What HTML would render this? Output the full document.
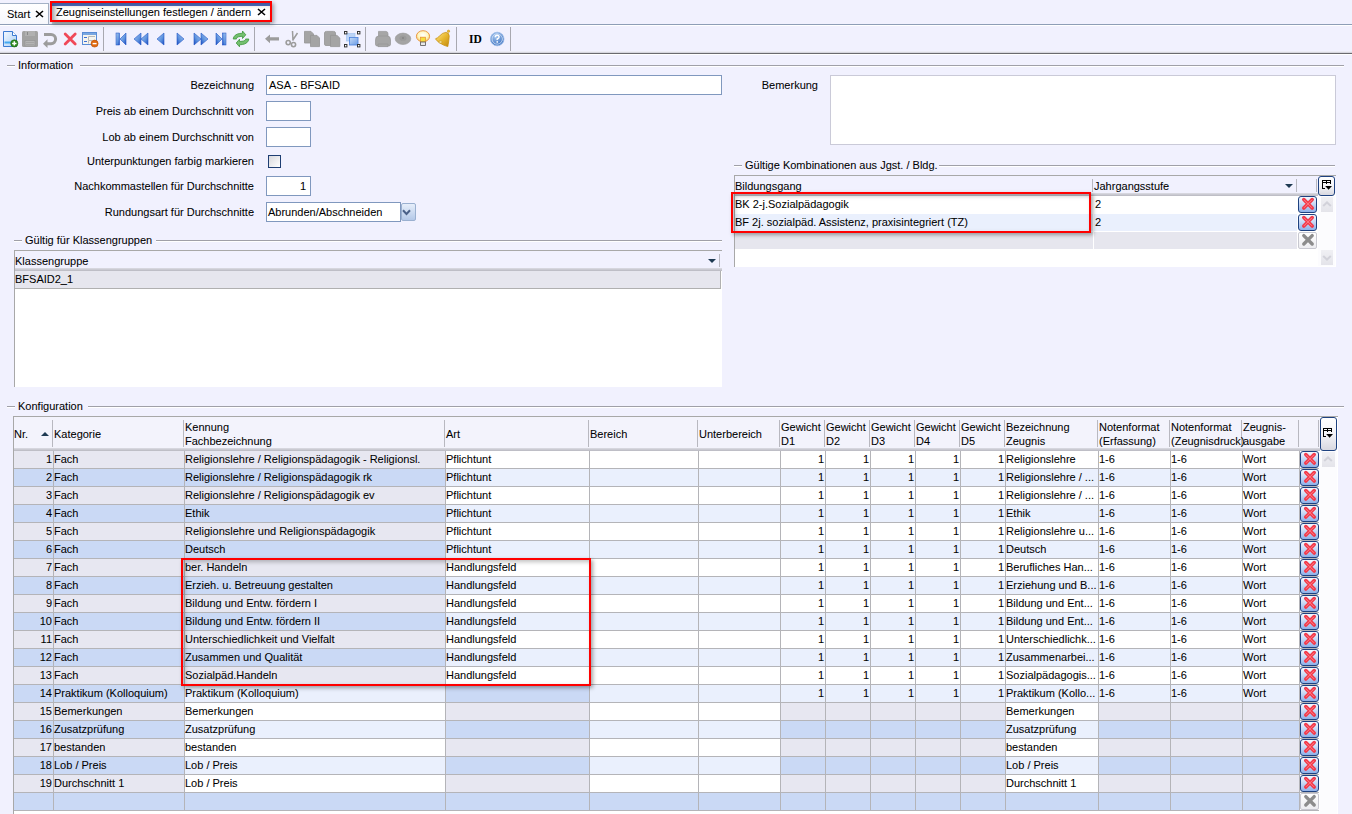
<!DOCTYPE html>
<html><head><meta charset="utf-8"><title>Zeugniseinstellungen</title><style>
html,body{margin:0;padding:0}
body{width:1352px;height:814px;overflow:hidden;position:relative;background:#F1F1FE;font-family:"Liberation Sans",sans-serif;font-size:11px;color:#000}
.t{position:absolute;line-height:13px;white-space:nowrap;-webkit-text-stroke:0.05px #000}
.r{position:absolute}
.db{width:19px;box-sizing:border-box;border:1px solid #1F4280;border-radius:3px;background:linear-gradient(#F4F8FF,#C4D6F4 50%,#8EB0E8)}
.dbi{width:19px;box-sizing:border-box;border:1px solid #C8C8D0;border-radius:2px;background:linear-gradient(#FFFFFF,#ECECF0)}
.cb{box-sizing:border-box;border:1px solid #1F4280;border-radius:3px;background:linear-gradient(#FFFFFF,#F4F4F8 50%,#D8D8E0)}
.red{box-sizing:border-box;border:2px solid #FF0000;box-shadow:2px 2px 4px rgba(0,0,0,0.35), inset 2px 2px 4px rgba(0,0,0,0.25)}
</style></head>
<body>
<div class="r" style="left:0px;top:24px;width:1352px;height:1px;background:#8E9EB6"></div>
<div class="r" style="left:0px;top:25px;width:1352px;height:1px;background:#FFFFFF"></div>
<div class="r" style="left:0px;top:3px;width:48px;height:21px;background:linear-gradient(#FFFFFF,#F6F7FC);border-top:1px solid #A4B2C6;border-right:1px solid #A4B2C6;box-sizing:border-box;width:49px"></div>
<div class="t " style="left:7px;top:8px;">Start</div>
<svg class="r" style="left:35px;top:10px" width="9" height="8"><path d="M1 1 L8 7 M8 1 L1 7" stroke="#000" stroke-width="1.6"/></svg>
<div class="r" style="left:52px;top:3px;width:218px;height:21px;background:linear-gradient(90deg,#D8D8DC 0,#FFFFFF 8px,#FFFFFF 100%);"></div>
<div class="r" style="left:52px;top:3px;width:218px;height:3px;background:#4F70C4"></div>
<div class="r" style="left:52px;top:21px;width:218px;height:3px;background:linear-gradient(#D4DCE0,#B8C4CC)"></div>
<div class="t " style="left:56px;top:6px;">Zeugniseinstellungen festlegen / ändern</div>
<svg class="r" style="left:257px;top:8px" width="9" height="8"><path d="M1 1 L8 7 M8 1 L1 7" stroke="#000" stroke-width="1.6"/></svg>
<div class="r" style="left:0px;top:51px;width:1352px;height:1px;background:#ECECF4"></div>
<div class="r" style="left:0px;top:52px;width:1352px;height:1px;background:#D6D6DE"></div>
<div class="r" style="left:0px;top:53px;width:1352px;height:1px;background:#6A6A6E"></div>
<div class="r" style="left:0px;top:54px;width:1352px;height:1px;background:#FFFFFF"></div>
<svg class="r" style="left:0;top:26px" width="520" height="26" viewBox="0 0 520 26"><defs>
<linearGradient id="gDoc" x1="0" y1="0" x2="1" y2="1"><stop offset="0" stop-color="#F4F9FF"/><stop offset="1" stop-color="#A9CDF5"/></linearGradient>
<linearGradient id="gNav" x1="0" y1="0" x2="1" y2="1"><stop offset="0" stop-color="#A8C8F0"/><stop offset="0.6" stop-color="#5C92DE"/><stop offset="1" stop-color="#1848C0"/></linearGradient>
<linearGradient id="gNavR" x1="1" y1="0" x2="0" y2="1"><stop offset="0" stop-color="#A8C8F0"/><stop offset="0.6" stop-color="#5C92DE"/><stop offset="1" stop-color="#1848C0"/></linearGradient>
<radialGradient id="gBulb" cx="0.5" cy="0.4" r="0.6"><stop offset="0" stop-color="#FFFFFF"/><stop offset="0.6" stop-color="#FFF6C0"/><stop offset="1" stop-color="#F8C860"/></radialGradient>
<linearGradient id="gBell" x1="0" y1="0" x2="1" y2="1"><stop offset="0" stop-color="#FFE890"/><stop offset="0.5" stop-color="#E8B830"/><stop offset="1" stop-color="#C08810"/></linearGradient>
<radialGradient id="gHelp" cx="0.4" cy="0.3" r="0.7"><stop offset="0" stop-color="#A8C8F0"/><stop offset="1" stop-color="#3A70C0"/></radialGradient>
<linearGradient id="gSel" x1="0" y1="0" x2="1" y2="1"><stop offset="0" stop-color="#C4DAF8"/><stop offset="1" stop-color="#6C9CE4"/></linearGradient>
</defs><path d="M3.5 5.5 H12.5 L16.5 9.5 V20.5 H3.5 Z" fill="url(#gDoc)" stroke="#3C7AD2" stroke-width="1"/><path d="M12.5 5.5 V9.5 H16.5" fill="#FFFFFF" stroke="#3C7AD2" stroke-width="1"/><rect x="4.5" y="15.5" width="8" height="2" fill="#44A8F0"/><circle cx="14.3" cy="17.4" r="3.6" fill="#2E8A22" stroke="#1E6A18" stroke-width="0.6"/><path d="M14.3 15.2 V19.6 M12.1 17.4 H16.5" stroke="#FFFFFF" stroke-width="1.5"/><rect x="22" y="5" width="16" height="16" rx="1.5" fill="#A2A2A2"/><rect x="25" y="5" width="10" height="5" fill="#B0B0B0"/><rect x="27" y="6" width="1" height="3" fill="#888"/><rect x="25" y="14.5" width="10" height="5.5" fill="#B4B4B4" stroke="#989898" stroke-width="0.8"/><path d="M26 16.5 H34 M26 18.5 H34" stroke="#A0A0A0" stroke-width="0.8"/><path d="M44 8.5 H51 A4.6 4.6 0 0 1 51 17.7 H47" fill="none" stroke="#9C9C9C" stroke-width="3"/><path d="M43 17.7 L47.5 13.2 V22 Z" fill="#9C9C9C"/><path d="M65.2 8 L75.2 18 M75.2 8 L65.2 18" stroke="#F04858" stroke-width="2.8" stroke-linecap="round"/><rect x="82.5" y="6.5" width="14" height="12" fill="#F6F4EE" stroke="#5A8CD6" stroke-width="1"/><rect x="83" y="7" width="13" height="2" fill="#7AA6E0"/><path d="M84 11.5 H87 M84 15.5 H87" stroke="#3A6ED6" stroke-width="1.2"/><path d="M88.5 14 V10.5 H95 M88.5 17.5 V14.5 H92" fill="none" stroke="#B8B8B8" stroke-width="1"/><circle cx="94.6" cy="17.6" r="3.5" fill="#E06A10" stroke="#B84A00" stroke-width="0.6"/><path d="M92.6 17.6 H96.6" stroke="#FFFFFF" stroke-width="1.4"/><rect x="116" y="7" width="3.6" height="12" fill="url(#gNav)" stroke="#1A4CC4" stroke-width="0.5"/><path d="M126 7 L120 13 L126 19 Z" fill="url(#gNav)" stroke="#2458C8" stroke-width="0.6"/><path d="M141 7 L134 13 L141 19 Z" fill="url(#gNav)" stroke="#2458C8" stroke-width="0.6"/><path d="M148 7 L141 13 L148 19 Z" fill="url(#gNav)" stroke="#2458C8" stroke-width="0.6"/><path d="M164 7 L157 13 L164 19 Z" fill="url(#gNav)" stroke="#2458C8" stroke-width="0.6"/><path d="M177 7 L184 13 L177 19 Z" fill="url(#gNavR)" stroke="#2458C8" stroke-width="0.6"/><path d="M194 7 L201 13 L194 19 Z" fill="url(#gNavR)" stroke="#2458C8" stroke-width="0.6"/><path d="M201 7 L208 13 L201 19 Z" fill="url(#gNavR)" stroke="#2458C8" stroke-width="0.6"/><path d="M216 7 L222 13 L216 19 Z" fill="url(#gNavR)" stroke="#2458C8" stroke-width="0.6"/><rect x="222.4" y="7" width="3.6" height="12" fill="url(#gNavR)" stroke="#1A4CC4" stroke-width="0.5"/><g transform="translate(230,2)"><path d="M3.2 11 C3.5 8 6 6 9.5 5.5 L12.5 5.2 L12.5 3 L15.8 6.8 L12.5 10.5 L12.5 8.3 L10 8.5 C7.5 8.7 6 10 6.5 11 Z" fill="#74C070" stroke="#3C963A" stroke-width="0.8"/><path d="M18.8 11 C18.5 14 16 16 12.5 16.5 L9.5 16.8 L9.5 18.8 L6.2 15 L9.5 11.2 L9.5 13.5 L12 13.3 C14.5 13 16 12 15.5 11 Z" fill="#74C070" stroke="#3C963A" stroke-width="0.8"/></g><path d="M265 12.8 L270 8.5 V11.3 H279 V14.5 H270 V17.2 Z" fill="#9C9C9C"/><g transform="translate(284,3)" stroke="#9C9C9C" fill="none"><path d="M8.5 2 L9 11.5 M13.5 4 L8.5 11.5" stroke-width="1.5"/><circle cx="4.2" cy="13.6" r="2.1" stroke-width="1.6"/><circle cx="9.5" cy="15.6" r="2.1" stroke-width="1.6"/></g><g transform="translate(284,3)" fill="#A4A4A4" stroke="#949494" stroke-width="0.8"><path d="M20.5 2.4 H27 L29.5 5 V14 H20.5 Z"/><path d="M26.5 6.4 H33 L35.5 9 V17.6 H26.5 Z"/><path d="M40.5 4 Q40.5 2.4 42.5 2.4 H49.5 Q51.5 2.4 51.5 4 V16.5 H42 Q40.5 16.5 40.5 15 Z"/><path d="M46.5 6.4 H53 L55.8 9 V17.6 H46.5 Z"/></g><g transform="translate(342,3)"><rect x="4.5" y="4.5" width="8.5" height="7.5" fill="#BCD4F6" stroke="#9CC0F0" stroke-width="0.6"/><rect x="7.5" y="8.5" width="8.5" height="7.5" fill="url(#gSel)" stroke="#4A80DC" stroke-width="0.8"/><rect x="2.5" y="2.5" width="2.4" height="2.4" fill="#FFF" stroke="#333" stroke-width="1"/><rect x="15.5" y="2.5" width="2.4" height="2.4" fill="#FFF" stroke="#333" stroke-width="1"/><rect x="2.5" y="15.5" width="2.4" height="2.4" fill="#FFF" stroke="#333" stroke-width="1"/><rect x="15.5" y="15.5" width="2.4" height="2.4" fill="#FFF" stroke="#333" stroke-width="1"/></g><g transform="translate(342,3)" fill="#A6A6A6" stroke="#959595" stroke-width="0.7"><path d="M36.5 2.4 H44 Q46 2.4 46 5 V9 H36.5 Z"/><path d="M33.5 11 Q33.5 7 36.5 7 H45.5 Q48.5 7 48.5 11 V15.5 Q48.5 17 46.5 17 H35.5 Q33.5 17 33.5 15.5 Z"/><path d="M36 15 H46 V17.6 H36 Z"/></g><g transform="translate(393,3)"><ellipse cx="10" cy="9.8" rx="7.8" ry="5.7" fill="#A4A4A4" stroke="#989898" stroke-width="0.6"/><ellipse cx="10" cy="9.2" rx="3.5" ry="2.6" fill="#9A9A9A"/><circle cx="10" cy="9" r="0.8" fill="#777"/><ellipse cx="30" cy="7.3" rx="6.6" ry="5.6" fill="url(#gBulb)" stroke="#E8903A" stroke-width="0.9"/><rect x="27.6" y="8.2" width="4.8" height="4.8" fill="#F4E040" stroke="#E88A30" stroke-width="0.7"/><rect x="27.6" y="13" width="4.8" height="3.4" fill="#E8E8E8" stroke="#555" stroke-width="0.8"/><path d="M42.5 9.8 Q44.5 9.2 46.5 7 Q49.5 3.6 52.8 3.4 Q56.2 3.6 56.2 7 Q56 10 55.6 13 Q55.2 15.5 54.8 17.6 Q50.5 16.5 46.5 13.8 Q43.8 12 42.5 9.8 Z" fill="url(#gBell)" stroke="#C89010" stroke-width="0.8"/><circle cx="55.5" cy="2.2" r="1.2" fill="#E8B830" stroke="#C89010" stroke-width="0.5"/><ellipse cx="47.5" cy="13" rx="1.6" ry="1.2" fill="#F8E8A0" stroke="#B88810" stroke-width="0.5"/></g><text x="469" y="17" font-family="Liberation Serif" font-weight="bold" font-size="11.5" fill="#000">ID</text><circle cx="497.2" cy="13" r="6.8" fill="url(#gHelp)" stroke="#9CBCE8" stroke-width="0.8"/><circle cx="497.2" cy="13" r="5.2" fill="none" stroke="#D8E6F8" stroke-width="0.8"/><path d="M495.3 11.2 Q495.3 9.2 497.2 9.2 Q499.1 9.2 499.1 11 Q499.1 12.2 497.2 13 V14" fill="none" stroke="#FFF" stroke-width="1.4"/><rect x="496.5" y="15.2" width="1.5" height="1.5" fill="#FFF"/><rect x="103" y="1" width="1" height="24" fill="#A8A8B0"/><rect x="254" y="1" width="1" height="24" fill="#A8A8B0"/><rect x="365" y="1" width="1" height="24" fill="#A8A8B0"/><rect x="456" y="1" width="1" height="24" fill="#A8A8B0"/><rect x="510" y="1" width="1" height="24" fill="#A8A8B0"/></svg>
<div class="r" style="left:7px;top:65px;width:8px;height:1px;background:#A0A0A8"></div>
<div class="r" style="left:7px;top:66px;width:8px;height:1px;background:#FFFFFF"></div>
<div class="t " style="left:18px;top:59px;">Information</div>
<div class="r" style="left:80px;top:65px;width:1264px;height:1px;background:#A0A0A8"></div>
<div class="r" style="left:80px;top:66px;width:1264px;height:1px;background:#FFFFFF"></div>
<div class="r" style="left:14px;top:240px;width:8px;height:1px;background:#A0A0A8"></div>
<div class="r" style="left:14px;top:241px;width:8px;height:1px;background:#FFFFFF"></div>
<div class="t " style="left:25px;top:234px;">Gültig für Klassengruppen</div>
<div class="r" style="left:156px;top:240px;width:566px;height:1px;background:#A0A0A8"></div>
<div class="r" style="left:156px;top:241px;width:566px;height:1px;background:#FFFFFF"></div>
<div class="r" style="left:734px;top:165px;width:8px;height:1px;background:#A0A0A8"></div>
<div class="r" style="left:734px;top:166px;width:8px;height:1px;background:#FFFFFF"></div>
<div class="t " style="left:745px;top:159px;">Gültige Kombinationen aus Jgst. / Bldg.</div>
<div class="r" style="left:939px;top:165px;width:396px;height:1px;background:#A0A0A8"></div>
<div class="r" style="left:939px;top:166px;width:396px;height:1px;background:#FFFFFF"></div>
<div class="r" style="left:7px;top:406px;width:8px;height:1px;background:#A0A0A8"></div>
<div class="r" style="left:7px;top:407px;width:8px;height:1px;background:#FFFFFF"></div>
<div class="t " style="left:18px;top:400px;">Konfiguration</div>
<div class="r" style="left:88px;top:406px;width:1256px;height:1px;background:#A0A0A8"></div>
<div class="r" style="left:88px;top:407px;width:1256px;height:1px;background:#FFFFFF"></div>
<div class="t " style="right:1098px;top:79px;">Bezeichnung</div>
<div class="t " style="right:1098px;top:105px;">Preis ab einem Durchschnitt von</div>
<div class="t " style="right:1098px;top:131px;">Lob ab einem Durchschnitt von</div>
<div class="t " style="right:1098px;top:155px;">Unterpunktungen farbig markieren</div>
<div class="t " style="right:1098px;top:180px;">Nachkommastellen für Durchschnitte</div>
<div class="t " style="right:1098px;top:206px;">Rundungsart für Durchschnitte</div>
<div class="r" style="left:266px;top:75px;width:456px;height:20px;background:#FFFFFF;border:1px solid #8098BE;box-sizing:border-box;"></div>
<div class="t " style="left:269px;top:79px;">ASA - BFSAID</div>
<div class="r" style="left:266px;top:101px;width:45px;height:20px;background:#FFFFFF;border:1px solid #8098BE;box-sizing:border-box;"></div>
<div class="r" style="left:266px;top:127px;width:45px;height:20px;background:#FFFFFF;border:1px solid #8098BE;box-sizing:border-box;"></div>
<div class="r" style="left:268px;top:155px;width:13px;height:13px;background:linear-gradient(135deg,#D8D8DC,#FFFFFF);border:1px solid #1E3E72;box-sizing:border-box;"></div>
<div class="r" style="left:266px;top:176px;width:45px;height:20px;background:#FFFFFF;border:1px solid #8098BE;box-sizing:border-box;"></div>
<div class="t " style="right:1046px;top:180px;">1</div>
<div class="r" style="left:266px;top:202px;width:135px;height:20px;background:#FFFFFF;border:1px solid #8098BE;box-sizing:border-box;"></div>
<div class="t " style="left:268px;top:206px;">Abrunden/Abschneiden</div>
<div class="r" style="left:401px;top:203px;width:15px;height:18px;background:linear-gradient(#E6EEFA,#B4C8E8);border:1px solid #9AB0D0;border-radius:2px;box-sizing:border-box;"></div>
<svg class="r" style="left:402px;top:209px" width="10" height="7"><path d="M1 1.2 L4.5 5 L8 1.2" stroke="#4A6088" stroke-width="2" fill="none"/></svg>
<div class="t " style="right:534px;top:79px;">Bemerkung</div>
<div class="r" style="left:830px;top:75px;width:506px;height:70px;background:#FFFFFF;border:1px solid #CACAD8;box-sizing:border-box;"></div>
<div class="r" style="left:14px;top:250px;width:708px;height:137px;background:#FFFFFF;border-left:1px solid #A8A8A8;border-top:1px solid #A8A8A8;box-sizing:border-box;"></div>
<div class="r" style="left:15px;top:251px;width:707px;height:17px;background:#F1F1FE"></div>
<div class="t " style="left:15px;top:255px;">Klassengruppe</div>
<div class="r" style="left:719px;top:254px;width:1px;height:13px;background:#B8B8C0"></div>
<svg class="r" style="left:708px;top:259px" width="9" height="5"><path d="M0 0 L8 0 L4 4 Z" fill="#1E3A52"/></svg>
<div class="r" style="left:15px;top:268px;width:707px;height:3px;background:linear-gradient(#DCDCE4,#B8B8C0)"></div>
<div class="r" style="left:15px;top:271px;width:706px;height:17px;background:#E6E6EE;border-right:1px solid #B0B0B0;box-sizing:border-box;"></div>
<div class="r" style="left:15px;top:288px;width:706px;height:1px;background:#B0B0B0"></div>
<div class="t " style="left:15px;top:273px;">BFSAID2_1</div>
<div class="r" style="left:734px;top:175px;width:602px;height:92px;background:#FFFFFF;border-left:1px solid #A8A8A8;border-top:1px solid #A8A8A8;box-sizing:border-box;"></div>
<div class="r" style="left:735px;top:176px;width:601px;height:17px;background:#F1F1FE"></div>
<div class="t " style="left:735px;top:180px;">Bildungsgang</div>
<div class="t " style="left:1094px;top:180px;">Jahrgangsstufe</div>
<div class="r" style="left:1092px;top:179px;width:1px;height:13px;background:#B8B8C0"></div>
<div class="r" style="left:1296px;top:179px;width:1px;height:13px;background:#B8B8C0"></div>
<div class="r" style="left:1316px;top:179px;width:1px;height:13px;background:#B8B8C0"></div>
<svg class="r" style="left:1285px;top:184px" width="9" height="5"><path d="M0 0 L8 0 L4 4 Z" fill="#1E3A52"/></svg>
<div class="r" style="left:735px;top:193px;width:583px;height:3px;background:linear-gradient(#DCDCE4,#B8B8C0)"></div>
<div class="r" style="left:735px;top:196px;width:358px;height:17px;background:#FFFFFF"></div>
<div class="r" style="left:1094px;top:196px;width:203px;height:17px;background:#FFFFFF"></div>
<div class="r" style="left:735px;top:214px;width:358px;height:17px;background:#EAF0FD"></div>
<div class="r" style="left:1094px;top:214px;width:203px;height:17px;background:#EAF0FD"></div>
<div class="r" style="left:735px;top:232px;width:358px;height:17px;background:#E6E6EE"></div>
<div class="r" style="left:1094px;top:232px;width:203px;height:17px;background:#E6E6EE"></div>
<div class="t " style="left:735px;top:198px;">BK 2-j.Sozialpädagogik</div>
<div class="t " style="left:1095px;top:198px;">2</div>
<div class="t " style="left:735px;top:216px;">BF 2j. sozialpäd. Assistenz, praxisintegriert (TZ)</div>
<div class="t " style="left:1095px;top:216px;">2</div>
<div class="r db" style="left:1298px;top:196px;height:17px"></div>
<svg class="r" style="left:1298px;top:196px" width="19" height="17"><path d="M5.8 3.6 L14.2 12 M14.2 3.6 L5.8 12" stroke="#F23A4A" stroke-width="3.6" stroke-linecap="round"/><path d="M6.2 4 L13.8 11.6 M13.8 4 L6.2 11.6" stroke="#FF7E88" stroke-width="1" stroke-linecap="round"/></svg>
<div class="r db" style="left:1298px;top:214px;height:17px"></div>
<svg class="r" style="left:1298px;top:214px" width="19" height="17"><path d="M5.8 3.6 L14.2 12 M14.2 3.6 L5.8 12" stroke="#F23A4A" stroke-width="3.6" stroke-linecap="round"/><path d="M6.2 4 L13.8 11.6 M13.8 4 L6.2 11.6" stroke="#FF7E88" stroke-width="1" stroke-linecap="round"/></svg>
<div class="r dbi" style="left:1298px;top:232px;height:17px"></div>
<svg class="r" style="left:1298px;top:232px" width="19" height="17"><path d="M5.8 3.6 L14.2 12 M14.2 3.6 L5.8 12" stroke="#8C8C8C" stroke-width="3.4" stroke-linecap="round"/></svg>
<div class="r cb" style="left:1318px;top:176px;width:17px;height:20px"></div>
<svg class="r" style="left:1322px;top:180px" width="11" height="10" shape-rendering="crispEdges"><rect x="0" y="0" width="9" height="1" fill="#000"/><rect x="0" y="2" width="9" height="1" fill="#000"/><rect x="0" y="1" width="1" height="1" fill="#000"/><rect x="4" y="1" width="1" height="1" fill="#000"/><rect x="8" y="1" width="1" height="1" fill="#000"/><rect x="4" y="3" width="1" height="1" fill="#000"/><rect x="8" y="3" width="1" height="1" fill="#000"/><rect x="0" y="0" width="1" height="9" fill="#000"/><rect x="0" y="8" width="3" height="1" fill="#000"/></svg>
<svg class="r" style="left:1322px;top:180px" width="11" height="10"><path d="M3.2 6.1 H10 L6.6 9.8 Z" fill="#000"/></svg>
<div class="r" style="left:1318px;top:196px;width:17px;height:70px;background:#FCFCFE"></div>
<div class="r" style="left:1321px;top:197px;width:12px;height:15px;background:linear-gradient(#F0F0F4,#E4E4EA)"></div>
<div class="r" style="left:1321px;top:250px;width:12px;height:15px;background:linear-gradient(#F0F0F4,#E4E4EA)"></div>
<svg class="r" style="left:1322px;top:201px" width="10" height="6"><path d="M1.2 5 L5 1.4 L8.8 5" stroke="#D2D2DA" stroke-width="2" fill="none"/></svg>
<svg class="r" style="left:1322px;top:255px" width="10" height="6"><path d="M1.2 1 L5 4.6 L8.8 1" stroke="#D2D2DA" stroke-width="2" fill="none"/></svg>
<div class="r" style="left:13px;top:416px;width:1325px;height:398px;background:#FFFFFF;border-left:1px solid #A8A8A8;border-top:1px solid #A8A8A8;box-sizing:border-box;"></div>
<div class="r" style="left:14px;top:417px;width:1306px;height:31px;background:#F3F3FC"></div>
<div class="r" style="left:14px;top:448px;width:1306px;height:3px;background:linear-gradient(#DCDCE4,#B8B8C0)"></div>
<div class="r" style="left:52px;top:420px;width:1px;height:27px;background:#B8B8C0"></div>
<div class="r" style="left:183px;top:420px;width:1px;height:27px;background:#B8B8C0"></div>
<div class="r" style="left:444px;top:420px;width:1px;height:27px;background:#B8B8C0"></div>
<div class="r" style="left:588px;top:420px;width:1px;height:27px;background:#B8B8C0"></div>
<div class="r" style="left:697px;top:420px;width:1px;height:27px;background:#B8B8C0"></div>
<div class="r" style="left:779px;top:420px;width:1px;height:27px;background:#B8B8C0"></div>
<div class="r" style="left:824px;top:420px;width:1px;height:27px;background:#B8B8C0"></div>
<div class="r" style="left:869px;top:420px;width:1px;height:27px;background:#B8B8C0"></div>
<div class="r" style="left:914px;top:420px;width:1px;height:27px;background:#B8B8C0"></div>
<div class="r" style="left:959px;top:420px;width:1px;height:27px;background:#B8B8C0"></div>
<div class="r" style="left:1004px;top:420px;width:1px;height:27px;background:#B8B8C0"></div>
<div class="r" style="left:1097px;top:420px;width:1px;height:27px;background:#B8B8C0"></div>
<div class="r" style="left:1169px;top:420px;width:1px;height:27px;background:#B8B8C0"></div>
<div class="r" style="left:1241px;top:420px;width:1px;height:27px;background:#B8B8C0"></div>
<div class="r" style="left:1298px;top:420px;width:1px;height:27px;background:#B8B8C0"></div>
<div class="r" style="left:1318px;top:420px;width:1px;height:27px;background:#B8B8C0"></div>
<div class="t " style="left:14px;top:428px;">Nr.</div>
<div class="t " style="left:54px;top:428px;">Kategorie</div>
<div class="t " style="left:185px;top:421px;">Kennung</div>
<div class="t " style="left:185px;top:435px;">Fachbezeichnung</div>
<div class="t " style="left:446px;top:428px;">Art</div>
<div class="t " style="left:590px;top:428px;">Bereich</div>
<div class="t " style="left:699px;top:428px;">Unterbereich</div>
<div class="t " style="left:781px;top:421px;">Gewicht</div>
<div class="t " style="left:781px;top:435px;">D1</div>
<div class="t " style="left:826px;top:421px;">Gewicht</div>
<div class="t " style="left:826px;top:435px;">D2</div>
<div class="t " style="left:871px;top:421px;">Gewicht</div>
<div class="t " style="left:871px;top:435px;">D3</div>
<div class="t " style="left:916px;top:421px;">Gewicht</div>
<div class="t " style="left:916px;top:435px;">D4</div>
<div class="t " style="left:961px;top:421px;">Gewicht</div>
<div class="t " style="left:961px;top:435px;">D5</div>
<div class="t " style="left:1006px;top:421px;">Bezeichnung</div>
<div class="t " style="left:1006px;top:435px;">Zeugnis</div>
<div class="t " style="left:1099px;top:421px;">Notenformat</div>
<div class="t " style="left:1099px;top:435px;">(Erfassung)</div>
<div class="t " style="left:1171px;top:421px;">Notenformat</div>
<div class="t " style="left:1171px;top:435px;">(Zeugnisdruck)</div>
<div class="t " style="left:1243px;top:421px;">Zeugnis-</div>
<div class="t " style="left:1243px;top:435px;">ausgabe</div>
<svg class="r" style="left:41px;top:432px" width="9" height="5"><path d="M0 4 L8 4 L4 0 Z" fill="#1E3A52"/></svg>
<div class="r cb" style="left:1320px;top:417px;width:17px;height:34px"></div>
<svg class="r" style="left:1323px;top:428px" width="11" height="10" shape-rendering="crispEdges"><rect x="0" y="0" width="9" height="1" fill="#000"/><rect x="0" y="2" width="9" height="1" fill="#000"/><rect x="0" y="1" width="1" height="1" fill="#000"/><rect x="4" y="1" width="1" height="1" fill="#000"/><rect x="8" y="1" width="1" height="1" fill="#000"/><rect x="4" y="3" width="1" height="1" fill="#000"/><rect x="8" y="3" width="1" height="1" fill="#000"/><rect x="0" y="0" width="1" height="9" fill="#000"/><rect x="0" y="8" width="3" height="1" fill="#000"/></svg>
<svg class="r" style="left:1323px;top:428px" width="11" height="10"><path d="M3.2 6.1 H10 L6.6 9.8 Z" fill="#000"/></svg>
<div class="r" style="left:14px;top:451px;width:39px;height:17px;background:#E7E7F1"></div>
<div class="r" style="left:54px;top:451px;width:130px;height:17px;background:#E7E7F1"></div>
<div class="r" style="left:185px;top:451px;width:260px;height:17px;background:#E7E7F1"></div>
<div class="r" style="left:446px;top:451px;width:143px;height:17px;background:#FFFFFF"></div>
<div class="r" style="left:590px;top:451px;width:108px;height:17px;background:#FFFFFF"></div>
<div class="r" style="left:699px;top:451px;width:81px;height:17px;background:#FFFFFF"></div>
<div class="r" style="left:781px;top:451px;width:44px;height:17px;background:#FFFFFF"></div>
<div class="r" style="left:826px;top:451px;width:44px;height:17px;background:#FFFFFF"></div>
<div class="r" style="left:871px;top:451px;width:44px;height:17px;background:#FFFFFF"></div>
<div class="r" style="left:916px;top:451px;width:44px;height:17px;background:#FFFFFF"></div>
<div class="r" style="left:961px;top:451px;width:44px;height:17px;background:#FFFFFF"></div>
<div class="r" style="left:1006px;top:451px;width:92px;height:17px;background:#FFFFFF"></div>
<div class="r" style="left:1099px;top:451px;width:71px;height:17px;background:#FFFFFF"></div>
<div class="r" style="left:1171px;top:451px;width:71px;height:17px;background:#FFFFFF"></div>
<div class="r" style="left:1243px;top:451px;width:56px;height:17px;background:#FFFFFF"></div>
<div class="r" style="left:14px;top:468px;width:1305px;height:1px;background:#B4B4B8"></div>
<div class="r" style="left:14px;top:469px;width:39px;height:17px;background:#CAD9F5"></div>
<div class="r" style="left:54px;top:469px;width:130px;height:17px;background:#CAD9F5"></div>
<div class="r" style="left:185px;top:469px;width:260px;height:17px;background:#CAD9F5"></div>
<div class="r" style="left:446px;top:469px;width:143px;height:17px;background:#EAF0FD"></div>
<div class="r" style="left:590px;top:469px;width:108px;height:17px;background:#EAF0FD"></div>
<div class="r" style="left:699px;top:469px;width:81px;height:17px;background:#EAF0FD"></div>
<div class="r" style="left:781px;top:469px;width:44px;height:17px;background:#EAF0FD"></div>
<div class="r" style="left:826px;top:469px;width:44px;height:17px;background:#EAF0FD"></div>
<div class="r" style="left:871px;top:469px;width:44px;height:17px;background:#EAF0FD"></div>
<div class="r" style="left:916px;top:469px;width:44px;height:17px;background:#EAF0FD"></div>
<div class="r" style="left:961px;top:469px;width:44px;height:17px;background:#EAF0FD"></div>
<div class="r" style="left:1006px;top:469px;width:92px;height:17px;background:#EAF0FD"></div>
<div class="r" style="left:1099px;top:469px;width:71px;height:17px;background:#EAF0FD"></div>
<div class="r" style="left:1171px;top:469px;width:71px;height:17px;background:#EAF0FD"></div>
<div class="r" style="left:1243px;top:469px;width:56px;height:17px;background:#EAF0FD"></div>
<div class="r" style="left:14px;top:486px;width:1305px;height:1px;background:#B4B4B8"></div>
<div class="r" style="left:14px;top:487px;width:39px;height:17px;background:#E7E7F1"></div>
<div class="r" style="left:54px;top:487px;width:130px;height:17px;background:#E7E7F1"></div>
<div class="r" style="left:185px;top:487px;width:260px;height:17px;background:#E7E7F1"></div>
<div class="r" style="left:446px;top:487px;width:143px;height:17px;background:#FFFFFF"></div>
<div class="r" style="left:590px;top:487px;width:108px;height:17px;background:#FFFFFF"></div>
<div class="r" style="left:699px;top:487px;width:81px;height:17px;background:#FFFFFF"></div>
<div class="r" style="left:781px;top:487px;width:44px;height:17px;background:#FFFFFF"></div>
<div class="r" style="left:826px;top:487px;width:44px;height:17px;background:#FFFFFF"></div>
<div class="r" style="left:871px;top:487px;width:44px;height:17px;background:#FFFFFF"></div>
<div class="r" style="left:916px;top:487px;width:44px;height:17px;background:#FFFFFF"></div>
<div class="r" style="left:961px;top:487px;width:44px;height:17px;background:#FFFFFF"></div>
<div class="r" style="left:1006px;top:487px;width:92px;height:17px;background:#FFFFFF"></div>
<div class="r" style="left:1099px;top:487px;width:71px;height:17px;background:#FFFFFF"></div>
<div class="r" style="left:1171px;top:487px;width:71px;height:17px;background:#FFFFFF"></div>
<div class="r" style="left:1243px;top:487px;width:56px;height:17px;background:#FFFFFF"></div>
<div class="r" style="left:14px;top:504px;width:1305px;height:1px;background:#B4B4B8"></div>
<div class="r" style="left:14px;top:505px;width:39px;height:17px;background:#CAD9F5"></div>
<div class="r" style="left:54px;top:505px;width:130px;height:17px;background:#CAD9F5"></div>
<div class="r" style="left:185px;top:505px;width:260px;height:17px;background:#CAD9F5"></div>
<div class="r" style="left:446px;top:505px;width:143px;height:17px;background:#EAF0FD"></div>
<div class="r" style="left:590px;top:505px;width:108px;height:17px;background:#EAF0FD"></div>
<div class="r" style="left:699px;top:505px;width:81px;height:17px;background:#EAF0FD"></div>
<div class="r" style="left:781px;top:505px;width:44px;height:17px;background:#EAF0FD"></div>
<div class="r" style="left:826px;top:505px;width:44px;height:17px;background:#EAF0FD"></div>
<div class="r" style="left:871px;top:505px;width:44px;height:17px;background:#EAF0FD"></div>
<div class="r" style="left:916px;top:505px;width:44px;height:17px;background:#EAF0FD"></div>
<div class="r" style="left:961px;top:505px;width:44px;height:17px;background:#EAF0FD"></div>
<div class="r" style="left:1006px;top:505px;width:92px;height:17px;background:#EAF0FD"></div>
<div class="r" style="left:1099px;top:505px;width:71px;height:17px;background:#EAF0FD"></div>
<div class="r" style="left:1171px;top:505px;width:71px;height:17px;background:#EAF0FD"></div>
<div class="r" style="left:1243px;top:505px;width:56px;height:17px;background:#EAF0FD"></div>
<div class="r" style="left:14px;top:522px;width:1305px;height:1px;background:#B4B4B8"></div>
<div class="r" style="left:14px;top:523px;width:39px;height:17px;background:#E7E7F1"></div>
<div class="r" style="left:54px;top:523px;width:130px;height:17px;background:#E7E7F1"></div>
<div class="r" style="left:185px;top:523px;width:260px;height:17px;background:#E7E7F1"></div>
<div class="r" style="left:446px;top:523px;width:143px;height:17px;background:#FFFFFF"></div>
<div class="r" style="left:590px;top:523px;width:108px;height:17px;background:#FFFFFF"></div>
<div class="r" style="left:699px;top:523px;width:81px;height:17px;background:#FFFFFF"></div>
<div class="r" style="left:781px;top:523px;width:44px;height:17px;background:#FFFFFF"></div>
<div class="r" style="left:826px;top:523px;width:44px;height:17px;background:#FFFFFF"></div>
<div class="r" style="left:871px;top:523px;width:44px;height:17px;background:#FFFFFF"></div>
<div class="r" style="left:916px;top:523px;width:44px;height:17px;background:#FFFFFF"></div>
<div class="r" style="left:961px;top:523px;width:44px;height:17px;background:#FFFFFF"></div>
<div class="r" style="left:1006px;top:523px;width:92px;height:17px;background:#FFFFFF"></div>
<div class="r" style="left:1099px;top:523px;width:71px;height:17px;background:#FFFFFF"></div>
<div class="r" style="left:1171px;top:523px;width:71px;height:17px;background:#FFFFFF"></div>
<div class="r" style="left:1243px;top:523px;width:56px;height:17px;background:#FFFFFF"></div>
<div class="r" style="left:14px;top:540px;width:1305px;height:1px;background:#B4B4B8"></div>
<div class="r" style="left:14px;top:541px;width:39px;height:17px;background:#CAD9F5"></div>
<div class="r" style="left:54px;top:541px;width:130px;height:17px;background:#CAD9F5"></div>
<div class="r" style="left:185px;top:541px;width:260px;height:17px;background:#CAD9F5"></div>
<div class="r" style="left:446px;top:541px;width:143px;height:17px;background:#EAF0FD"></div>
<div class="r" style="left:590px;top:541px;width:108px;height:17px;background:#EAF0FD"></div>
<div class="r" style="left:699px;top:541px;width:81px;height:17px;background:#EAF0FD"></div>
<div class="r" style="left:781px;top:541px;width:44px;height:17px;background:#EAF0FD"></div>
<div class="r" style="left:826px;top:541px;width:44px;height:17px;background:#EAF0FD"></div>
<div class="r" style="left:871px;top:541px;width:44px;height:17px;background:#EAF0FD"></div>
<div class="r" style="left:916px;top:541px;width:44px;height:17px;background:#EAF0FD"></div>
<div class="r" style="left:961px;top:541px;width:44px;height:17px;background:#EAF0FD"></div>
<div class="r" style="left:1006px;top:541px;width:92px;height:17px;background:#EAF0FD"></div>
<div class="r" style="left:1099px;top:541px;width:71px;height:17px;background:#EAF0FD"></div>
<div class="r" style="left:1171px;top:541px;width:71px;height:17px;background:#EAF0FD"></div>
<div class="r" style="left:1243px;top:541px;width:56px;height:17px;background:#EAF0FD"></div>
<div class="r" style="left:14px;top:558px;width:1305px;height:1px;background:#B4B4B8"></div>
<div class="r" style="left:14px;top:559px;width:39px;height:17px;background:#E7E7F1"></div>
<div class="r" style="left:54px;top:559px;width:130px;height:17px;background:#E7E7F1"></div>
<div class="r" style="left:185px;top:559px;width:260px;height:17px;background:#E7E7F1"></div>
<div class="r" style="left:446px;top:559px;width:143px;height:17px;background:#FFFFFF"></div>
<div class="r" style="left:590px;top:559px;width:108px;height:17px;background:#FFFFFF"></div>
<div class="r" style="left:699px;top:559px;width:81px;height:17px;background:#FFFFFF"></div>
<div class="r" style="left:781px;top:559px;width:44px;height:17px;background:#FFFFFF"></div>
<div class="r" style="left:826px;top:559px;width:44px;height:17px;background:#FFFFFF"></div>
<div class="r" style="left:871px;top:559px;width:44px;height:17px;background:#FFFFFF"></div>
<div class="r" style="left:916px;top:559px;width:44px;height:17px;background:#FFFFFF"></div>
<div class="r" style="left:961px;top:559px;width:44px;height:17px;background:#FFFFFF"></div>
<div class="r" style="left:1006px;top:559px;width:92px;height:17px;background:#FFFFFF"></div>
<div class="r" style="left:1099px;top:559px;width:71px;height:17px;background:#FFFFFF"></div>
<div class="r" style="left:1171px;top:559px;width:71px;height:17px;background:#FFFFFF"></div>
<div class="r" style="left:1243px;top:559px;width:56px;height:17px;background:#FFFFFF"></div>
<div class="r" style="left:14px;top:576px;width:1305px;height:1px;background:#B4B4B8"></div>
<div class="r" style="left:14px;top:577px;width:39px;height:17px;background:#CAD9F5"></div>
<div class="r" style="left:54px;top:577px;width:130px;height:17px;background:#CAD9F5"></div>
<div class="r" style="left:185px;top:577px;width:260px;height:17px;background:#CAD9F5"></div>
<div class="r" style="left:446px;top:577px;width:143px;height:17px;background:#EAF0FD"></div>
<div class="r" style="left:590px;top:577px;width:108px;height:17px;background:#EAF0FD"></div>
<div class="r" style="left:699px;top:577px;width:81px;height:17px;background:#EAF0FD"></div>
<div class="r" style="left:781px;top:577px;width:44px;height:17px;background:#EAF0FD"></div>
<div class="r" style="left:826px;top:577px;width:44px;height:17px;background:#EAF0FD"></div>
<div class="r" style="left:871px;top:577px;width:44px;height:17px;background:#EAF0FD"></div>
<div class="r" style="left:916px;top:577px;width:44px;height:17px;background:#EAF0FD"></div>
<div class="r" style="left:961px;top:577px;width:44px;height:17px;background:#EAF0FD"></div>
<div class="r" style="left:1006px;top:577px;width:92px;height:17px;background:#EAF0FD"></div>
<div class="r" style="left:1099px;top:577px;width:71px;height:17px;background:#EAF0FD"></div>
<div class="r" style="left:1171px;top:577px;width:71px;height:17px;background:#EAF0FD"></div>
<div class="r" style="left:1243px;top:577px;width:56px;height:17px;background:#EAF0FD"></div>
<div class="r" style="left:14px;top:594px;width:1305px;height:1px;background:#B4B4B8"></div>
<div class="r" style="left:14px;top:595px;width:39px;height:17px;background:#E7E7F1"></div>
<div class="r" style="left:54px;top:595px;width:130px;height:17px;background:#E7E7F1"></div>
<div class="r" style="left:185px;top:595px;width:260px;height:17px;background:#E7E7F1"></div>
<div class="r" style="left:446px;top:595px;width:143px;height:17px;background:#FFFFFF"></div>
<div class="r" style="left:590px;top:595px;width:108px;height:17px;background:#FFFFFF"></div>
<div class="r" style="left:699px;top:595px;width:81px;height:17px;background:#FFFFFF"></div>
<div class="r" style="left:781px;top:595px;width:44px;height:17px;background:#FFFFFF"></div>
<div class="r" style="left:826px;top:595px;width:44px;height:17px;background:#FFFFFF"></div>
<div class="r" style="left:871px;top:595px;width:44px;height:17px;background:#FFFFFF"></div>
<div class="r" style="left:916px;top:595px;width:44px;height:17px;background:#FFFFFF"></div>
<div class="r" style="left:961px;top:595px;width:44px;height:17px;background:#FFFFFF"></div>
<div class="r" style="left:1006px;top:595px;width:92px;height:17px;background:#FFFFFF"></div>
<div class="r" style="left:1099px;top:595px;width:71px;height:17px;background:#FFFFFF"></div>
<div class="r" style="left:1171px;top:595px;width:71px;height:17px;background:#FFFFFF"></div>
<div class="r" style="left:1243px;top:595px;width:56px;height:17px;background:#FFFFFF"></div>
<div class="r" style="left:14px;top:612px;width:1305px;height:1px;background:#B4B4B8"></div>
<div class="r" style="left:14px;top:613px;width:39px;height:17px;background:#CAD9F5"></div>
<div class="r" style="left:54px;top:613px;width:130px;height:17px;background:#CAD9F5"></div>
<div class="r" style="left:185px;top:613px;width:260px;height:17px;background:#CAD9F5"></div>
<div class="r" style="left:446px;top:613px;width:143px;height:17px;background:#EAF0FD"></div>
<div class="r" style="left:590px;top:613px;width:108px;height:17px;background:#EAF0FD"></div>
<div class="r" style="left:699px;top:613px;width:81px;height:17px;background:#EAF0FD"></div>
<div class="r" style="left:781px;top:613px;width:44px;height:17px;background:#EAF0FD"></div>
<div class="r" style="left:826px;top:613px;width:44px;height:17px;background:#EAF0FD"></div>
<div class="r" style="left:871px;top:613px;width:44px;height:17px;background:#EAF0FD"></div>
<div class="r" style="left:916px;top:613px;width:44px;height:17px;background:#EAF0FD"></div>
<div class="r" style="left:961px;top:613px;width:44px;height:17px;background:#EAF0FD"></div>
<div class="r" style="left:1006px;top:613px;width:92px;height:17px;background:#EAF0FD"></div>
<div class="r" style="left:1099px;top:613px;width:71px;height:17px;background:#EAF0FD"></div>
<div class="r" style="left:1171px;top:613px;width:71px;height:17px;background:#EAF0FD"></div>
<div class="r" style="left:1243px;top:613px;width:56px;height:17px;background:#EAF0FD"></div>
<div class="r" style="left:14px;top:630px;width:1305px;height:1px;background:#B4B4B8"></div>
<div class="r" style="left:14px;top:631px;width:39px;height:17px;background:#E7E7F1"></div>
<div class="r" style="left:54px;top:631px;width:130px;height:17px;background:#E7E7F1"></div>
<div class="r" style="left:185px;top:631px;width:260px;height:17px;background:#E7E7F1"></div>
<div class="r" style="left:446px;top:631px;width:143px;height:17px;background:#FFFFFF"></div>
<div class="r" style="left:590px;top:631px;width:108px;height:17px;background:#FFFFFF"></div>
<div class="r" style="left:699px;top:631px;width:81px;height:17px;background:#FFFFFF"></div>
<div class="r" style="left:781px;top:631px;width:44px;height:17px;background:#FFFFFF"></div>
<div class="r" style="left:826px;top:631px;width:44px;height:17px;background:#FFFFFF"></div>
<div class="r" style="left:871px;top:631px;width:44px;height:17px;background:#FFFFFF"></div>
<div class="r" style="left:916px;top:631px;width:44px;height:17px;background:#FFFFFF"></div>
<div class="r" style="left:961px;top:631px;width:44px;height:17px;background:#FFFFFF"></div>
<div class="r" style="left:1006px;top:631px;width:92px;height:17px;background:#FFFFFF"></div>
<div class="r" style="left:1099px;top:631px;width:71px;height:17px;background:#FFFFFF"></div>
<div class="r" style="left:1171px;top:631px;width:71px;height:17px;background:#FFFFFF"></div>
<div class="r" style="left:1243px;top:631px;width:56px;height:17px;background:#FFFFFF"></div>
<div class="r" style="left:14px;top:648px;width:1305px;height:1px;background:#B4B4B8"></div>
<div class="r" style="left:14px;top:649px;width:39px;height:17px;background:#CAD9F5"></div>
<div class="r" style="left:54px;top:649px;width:130px;height:17px;background:#CAD9F5"></div>
<div class="r" style="left:185px;top:649px;width:260px;height:17px;background:#CAD9F5"></div>
<div class="r" style="left:446px;top:649px;width:143px;height:17px;background:#EAF0FD"></div>
<div class="r" style="left:590px;top:649px;width:108px;height:17px;background:#EAF0FD"></div>
<div class="r" style="left:699px;top:649px;width:81px;height:17px;background:#EAF0FD"></div>
<div class="r" style="left:781px;top:649px;width:44px;height:17px;background:#EAF0FD"></div>
<div class="r" style="left:826px;top:649px;width:44px;height:17px;background:#EAF0FD"></div>
<div class="r" style="left:871px;top:649px;width:44px;height:17px;background:#EAF0FD"></div>
<div class="r" style="left:916px;top:649px;width:44px;height:17px;background:#EAF0FD"></div>
<div class="r" style="left:961px;top:649px;width:44px;height:17px;background:#EAF0FD"></div>
<div class="r" style="left:1006px;top:649px;width:92px;height:17px;background:#EAF0FD"></div>
<div class="r" style="left:1099px;top:649px;width:71px;height:17px;background:#EAF0FD"></div>
<div class="r" style="left:1171px;top:649px;width:71px;height:17px;background:#EAF0FD"></div>
<div class="r" style="left:1243px;top:649px;width:56px;height:17px;background:#EAF0FD"></div>
<div class="r" style="left:14px;top:666px;width:1305px;height:1px;background:#B4B4B8"></div>
<div class="r" style="left:14px;top:667px;width:39px;height:17px;background:#E7E7F1"></div>
<div class="r" style="left:54px;top:667px;width:130px;height:17px;background:#E7E7F1"></div>
<div class="r" style="left:185px;top:667px;width:260px;height:17px;background:#E7E7F1"></div>
<div class="r" style="left:446px;top:667px;width:143px;height:17px;background:#FFFFFF"></div>
<div class="r" style="left:590px;top:667px;width:108px;height:17px;background:#FFFFFF"></div>
<div class="r" style="left:699px;top:667px;width:81px;height:17px;background:#FFFFFF"></div>
<div class="r" style="left:781px;top:667px;width:44px;height:17px;background:#FFFFFF"></div>
<div class="r" style="left:826px;top:667px;width:44px;height:17px;background:#FFFFFF"></div>
<div class="r" style="left:871px;top:667px;width:44px;height:17px;background:#FFFFFF"></div>
<div class="r" style="left:916px;top:667px;width:44px;height:17px;background:#FFFFFF"></div>
<div class="r" style="left:961px;top:667px;width:44px;height:17px;background:#FFFFFF"></div>
<div class="r" style="left:1006px;top:667px;width:92px;height:17px;background:#FFFFFF"></div>
<div class="r" style="left:1099px;top:667px;width:71px;height:17px;background:#FFFFFF"></div>
<div class="r" style="left:1171px;top:667px;width:71px;height:17px;background:#FFFFFF"></div>
<div class="r" style="left:1243px;top:667px;width:56px;height:17px;background:#FFFFFF"></div>
<div class="r" style="left:14px;top:684px;width:1305px;height:1px;background:#B4B4B8"></div>
<div class="r" style="left:14px;top:685px;width:39px;height:17px;background:#CAD9F5"></div>
<div class="r" style="left:54px;top:685px;width:130px;height:17px;background:#CAD9F5"></div>
<div class="r" style="left:185px;top:685px;width:260px;height:17px;background:#EAF0FD"></div>
<div class="r" style="left:446px;top:685px;width:143px;height:17px;background:#CAD9F5"></div>
<div class="r" style="left:590px;top:685px;width:108px;height:17px;background:#EAF0FD"></div>
<div class="r" style="left:699px;top:685px;width:81px;height:17px;background:#EAF0FD"></div>
<div class="r" style="left:781px;top:685px;width:44px;height:17px;background:#EAF0FD"></div>
<div class="r" style="left:826px;top:685px;width:44px;height:17px;background:#EAF0FD"></div>
<div class="r" style="left:871px;top:685px;width:44px;height:17px;background:#EAF0FD"></div>
<div class="r" style="left:916px;top:685px;width:44px;height:17px;background:#EAF0FD"></div>
<div class="r" style="left:961px;top:685px;width:44px;height:17px;background:#EAF0FD"></div>
<div class="r" style="left:1006px;top:685px;width:92px;height:17px;background:#EAF0FD"></div>
<div class="r" style="left:1099px;top:685px;width:71px;height:17px;background:#EAF0FD"></div>
<div class="r" style="left:1171px;top:685px;width:71px;height:17px;background:#EAF0FD"></div>
<div class="r" style="left:1243px;top:685px;width:56px;height:17px;background:#EAF0FD"></div>
<div class="r" style="left:14px;top:702px;width:1305px;height:1px;background:#B4B4B8"></div>
<div class="r" style="left:14px;top:703px;width:39px;height:17px;background:#E7E7F1"></div>
<div class="r" style="left:54px;top:703px;width:130px;height:17px;background:#E7E7F1"></div>
<div class="r" style="left:185px;top:703px;width:260px;height:17px;background:#FFFFFF"></div>
<div class="r" style="left:446px;top:703px;width:143px;height:17px;background:#E7E7F1"></div>
<div class="r" style="left:590px;top:703px;width:108px;height:17px;background:#FFFFFF"></div>
<div class="r" style="left:699px;top:703px;width:81px;height:17px;background:#FFFFFF"></div>
<div class="r" style="left:781px;top:703px;width:44px;height:17px;background:#E7E7F1"></div>
<div class="r" style="left:826px;top:703px;width:44px;height:17px;background:#E7E7F1"></div>
<div class="r" style="left:871px;top:703px;width:44px;height:17px;background:#E7E7F1"></div>
<div class="r" style="left:916px;top:703px;width:44px;height:17px;background:#E7E7F1"></div>
<div class="r" style="left:961px;top:703px;width:44px;height:17px;background:#E7E7F1"></div>
<div class="r" style="left:1006px;top:703px;width:92px;height:17px;background:#FFFFFF"></div>
<div class="r" style="left:1099px;top:703px;width:71px;height:17px;background:#E7E7F1"></div>
<div class="r" style="left:1171px;top:703px;width:71px;height:17px;background:#E7E7F1"></div>
<div class="r" style="left:1243px;top:703px;width:56px;height:17px;background:#E7E7F1"></div>
<div class="r" style="left:14px;top:720px;width:1305px;height:1px;background:#B4B4B8"></div>
<div class="r" style="left:14px;top:721px;width:39px;height:17px;background:#CAD9F5"></div>
<div class="r" style="left:54px;top:721px;width:130px;height:17px;background:#CAD9F5"></div>
<div class="r" style="left:185px;top:721px;width:260px;height:17px;background:#EAF0FD"></div>
<div class="r" style="left:446px;top:721px;width:143px;height:17px;background:#CAD9F5"></div>
<div class="r" style="left:590px;top:721px;width:108px;height:17px;background:#EAF0FD"></div>
<div class="r" style="left:699px;top:721px;width:81px;height:17px;background:#EAF0FD"></div>
<div class="r" style="left:781px;top:721px;width:44px;height:17px;background:#CAD9F5"></div>
<div class="r" style="left:826px;top:721px;width:44px;height:17px;background:#CAD9F5"></div>
<div class="r" style="left:871px;top:721px;width:44px;height:17px;background:#CAD9F5"></div>
<div class="r" style="left:916px;top:721px;width:44px;height:17px;background:#CAD9F5"></div>
<div class="r" style="left:961px;top:721px;width:44px;height:17px;background:#CAD9F5"></div>
<div class="r" style="left:1006px;top:721px;width:92px;height:17px;background:#EAF0FD"></div>
<div class="r" style="left:1099px;top:721px;width:71px;height:17px;background:#CAD9F5"></div>
<div class="r" style="left:1171px;top:721px;width:71px;height:17px;background:#CAD9F5"></div>
<div class="r" style="left:1243px;top:721px;width:56px;height:17px;background:#CAD9F5"></div>
<div class="r" style="left:14px;top:738px;width:1305px;height:1px;background:#B4B4B8"></div>
<div class="r" style="left:14px;top:739px;width:39px;height:17px;background:#E7E7F1"></div>
<div class="r" style="left:54px;top:739px;width:130px;height:17px;background:#E7E7F1"></div>
<div class="r" style="left:185px;top:739px;width:260px;height:17px;background:#FFFFFF"></div>
<div class="r" style="left:446px;top:739px;width:143px;height:17px;background:#E7E7F1"></div>
<div class="r" style="left:590px;top:739px;width:108px;height:17px;background:#FFFFFF"></div>
<div class="r" style="left:699px;top:739px;width:81px;height:17px;background:#FFFFFF"></div>
<div class="r" style="left:781px;top:739px;width:44px;height:17px;background:#E7E7F1"></div>
<div class="r" style="left:826px;top:739px;width:44px;height:17px;background:#E7E7F1"></div>
<div class="r" style="left:871px;top:739px;width:44px;height:17px;background:#E7E7F1"></div>
<div class="r" style="left:916px;top:739px;width:44px;height:17px;background:#E7E7F1"></div>
<div class="r" style="left:961px;top:739px;width:44px;height:17px;background:#E7E7F1"></div>
<div class="r" style="left:1006px;top:739px;width:92px;height:17px;background:#FFFFFF"></div>
<div class="r" style="left:1099px;top:739px;width:71px;height:17px;background:#E7E7F1"></div>
<div class="r" style="left:1171px;top:739px;width:71px;height:17px;background:#E7E7F1"></div>
<div class="r" style="left:1243px;top:739px;width:56px;height:17px;background:#E7E7F1"></div>
<div class="r" style="left:14px;top:756px;width:1305px;height:1px;background:#B4B4B8"></div>
<div class="r" style="left:14px;top:757px;width:39px;height:17px;background:#CAD9F5"></div>
<div class="r" style="left:54px;top:757px;width:130px;height:17px;background:#CAD9F5"></div>
<div class="r" style="left:185px;top:757px;width:260px;height:17px;background:#EAF0FD"></div>
<div class="r" style="left:446px;top:757px;width:143px;height:17px;background:#CAD9F5"></div>
<div class="r" style="left:590px;top:757px;width:108px;height:17px;background:#EAF0FD"></div>
<div class="r" style="left:699px;top:757px;width:81px;height:17px;background:#EAF0FD"></div>
<div class="r" style="left:781px;top:757px;width:44px;height:17px;background:#CAD9F5"></div>
<div class="r" style="left:826px;top:757px;width:44px;height:17px;background:#CAD9F5"></div>
<div class="r" style="left:871px;top:757px;width:44px;height:17px;background:#CAD9F5"></div>
<div class="r" style="left:916px;top:757px;width:44px;height:17px;background:#CAD9F5"></div>
<div class="r" style="left:961px;top:757px;width:44px;height:17px;background:#CAD9F5"></div>
<div class="r" style="left:1006px;top:757px;width:92px;height:17px;background:#EAF0FD"></div>
<div class="r" style="left:1099px;top:757px;width:71px;height:17px;background:#CAD9F5"></div>
<div class="r" style="left:1171px;top:757px;width:71px;height:17px;background:#CAD9F5"></div>
<div class="r" style="left:1243px;top:757px;width:56px;height:17px;background:#CAD9F5"></div>
<div class="r" style="left:14px;top:774px;width:1305px;height:1px;background:#B4B4B8"></div>
<div class="r" style="left:14px;top:775px;width:39px;height:17px;background:#E7E7F1"></div>
<div class="r" style="left:54px;top:775px;width:130px;height:17px;background:#E7E7F1"></div>
<div class="r" style="left:185px;top:775px;width:260px;height:17px;background:#FFFFFF"></div>
<div class="r" style="left:446px;top:775px;width:143px;height:17px;background:#E7E7F1"></div>
<div class="r" style="left:590px;top:775px;width:108px;height:17px;background:#FFFFFF"></div>
<div class="r" style="left:699px;top:775px;width:81px;height:17px;background:#FFFFFF"></div>
<div class="r" style="left:781px;top:775px;width:44px;height:17px;background:#E7E7F1"></div>
<div class="r" style="left:826px;top:775px;width:44px;height:17px;background:#E7E7F1"></div>
<div class="r" style="left:871px;top:775px;width:44px;height:17px;background:#E7E7F1"></div>
<div class="r" style="left:916px;top:775px;width:44px;height:17px;background:#E7E7F1"></div>
<div class="r" style="left:961px;top:775px;width:44px;height:17px;background:#E7E7F1"></div>
<div class="r" style="left:1006px;top:775px;width:92px;height:17px;background:#FFFFFF"></div>
<div class="r" style="left:1099px;top:775px;width:71px;height:17px;background:#E7E7F1"></div>
<div class="r" style="left:1171px;top:775px;width:71px;height:17px;background:#E7E7F1"></div>
<div class="r" style="left:1243px;top:775px;width:56px;height:17px;background:#E7E7F1"></div>
<div class="r" style="left:14px;top:792px;width:1305px;height:1px;background:#B4B4B8"></div>
<div class="r" style="left:14px;top:793px;width:39px;height:17px;background:#CAD9F5"></div>
<div class="r" style="left:54px;top:793px;width:130px;height:17px;background:#CAD9F5"></div>
<div class="r" style="left:185px;top:793px;width:260px;height:17px;background:#CAD9F5"></div>
<div class="r" style="left:446px;top:793px;width:143px;height:17px;background:#CAD9F5"></div>
<div class="r" style="left:590px;top:793px;width:108px;height:17px;background:#CAD9F5"></div>
<div class="r" style="left:699px;top:793px;width:81px;height:17px;background:#CAD9F5"></div>
<div class="r" style="left:781px;top:793px;width:44px;height:17px;background:#CAD9F5"></div>
<div class="r" style="left:826px;top:793px;width:44px;height:17px;background:#CAD9F5"></div>
<div class="r" style="left:871px;top:793px;width:44px;height:17px;background:#CAD9F5"></div>
<div class="r" style="left:916px;top:793px;width:44px;height:17px;background:#CAD9F5"></div>
<div class="r" style="left:961px;top:793px;width:44px;height:17px;background:#CAD9F5"></div>
<div class="r" style="left:1006px;top:793px;width:92px;height:17px;background:#CAD9F5"></div>
<div class="r" style="left:1099px;top:793px;width:71px;height:17px;background:#CAD9F5"></div>
<div class="r" style="left:1171px;top:793px;width:71px;height:17px;background:#CAD9F5"></div>
<div class="r" style="left:1243px;top:793px;width:56px;height:17px;background:#CAD9F5"></div>
<div class="r" style="left:14px;top:810px;width:1305px;height:1px;background:#B4B4B8"></div>
<div class="r" style="left:53px;top:451px;width:1px;height:360px;background:#B4B4B8"></div>
<div class="r" style="left:184px;top:451px;width:1px;height:360px;background:#B4B4B8"></div>
<div class="r" style="left:445px;top:451px;width:1px;height:360px;background:#B4B4B8"></div>
<div class="r" style="left:589px;top:451px;width:1px;height:360px;background:#B4B4B8"></div>
<div class="r" style="left:698px;top:451px;width:1px;height:360px;background:#B4B4B8"></div>
<div class="r" style="left:780px;top:451px;width:1px;height:360px;background:#B4B4B8"></div>
<div class="r" style="left:825px;top:451px;width:1px;height:360px;background:#B4B4B8"></div>
<div class="r" style="left:870px;top:451px;width:1px;height:360px;background:#B4B4B8"></div>
<div class="r" style="left:915px;top:451px;width:1px;height:360px;background:#B4B4B8"></div>
<div class="r" style="left:960px;top:451px;width:1px;height:360px;background:#B4B4B8"></div>
<div class="r" style="left:1005px;top:451px;width:1px;height:360px;background:#B4B4B8"></div>
<div class="r" style="left:1098px;top:451px;width:1px;height:360px;background:#B4B4B8"></div>
<div class="r" style="left:1170px;top:451px;width:1px;height:360px;background:#B4B4B8"></div>
<div class="r" style="left:1242px;top:451px;width:1px;height:360px;background:#B4B4B8"></div>
<div class="r" style="left:1299px;top:451px;width:1px;height:360px;background:#B4B4B8"></div>
<div class="t " style="right:1300px;top:453px;">1</div>
<div class="t " style="left:54px;top:453px;">Fach</div>
<div class="t " style="left:185px;top:453px;">Religionslehre / Religionspädagogik - Religionsl.</div>
<div class="t " style="left:446px;top:453px;">Pflichtunt</div>
<div class="t " style="right:528px;top:453px;">1</div>
<div class="t " style="right:483px;top:453px;">1</div>
<div class="t " style="right:438px;top:453px;">1</div>
<div class="t " style="right:393px;top:453px;">1</div>
<div class="t " style="right:348px;top:453px;">1</div>
<div class="t " style="left:1099px;top:453px;">1-6</div>
<div class="t " style="left:1171px;top:453px;">1-6</div>
<div class="t " style="left:1243px;top:453px;">Wort</div>
<div class="t " style="left:1006px;top:453px;">Religionslehre</div>
<div class="t " style="right:1300px;top:471px;">2</div>
<div class="t " style="left:54px;top:471px;">Fach</div>
<div class="t " style="left:185px;top:471px;">Religionslehre / Religionspädagogik rk</div>
<div class="t " style="left:446px;top:471px;">Pflichtunt</div>
<div class="t " style="right:528px;top:471px;">1</div>
<div class="t " style="right:483px;top:471px;">1</div>
<div class="t " style="right:438px;top:471px;">1</div>
<div class="t " style="right:393px;top:471px;">1</div>
<div class="t " style="right:348px;top:471px;">1</div>
<div class="t " style="left:1099px;top:471px;">1-6</div>
<div class="t " style="left:1171px;top:471px;">1-6</div>
<div class="t " style="left:1243px;top:471px;">Wort</div>
<div class="t " style="left:1006px;top:471px;">Religionslehre / ...</div>
<div class="t " style="right:1300px;top:489px;">3</div>
<div class="t " style="left:54px;top:489px;">Fach</div>
<div class="t " style="left:185px;top:489px;">Religionslehre / Religionspädagogik ev</div>
<div class="t " style="left:446px;top:489px;">Pflichtunt</div>
<div class="t " style="right:528px;top:489px;">1</div>
<div class="t " style="right:483px;top:489px;">1</div>
<div class="t " style="right:438px;top:489px;">1</div>
<div class="t " style="right:393px;top:489px;">1</div>
<div class="t " style="right:348px;top:489px;">1</div>
<div class="t " style="left:1099px;top:489px;">1-6</div>
<div class="t " style="left:1171px;top:489px;">1-6</div>
<div class="t " style="left:1243px;top:489px;">Wort</div>
<div class="t " style="left:1006px;top:489px;">Religionslehre / ...</div>
<div class="t " style="right:1300px;top:507px;">4</div>
<div class="t " style="left:54px;top:507px;">Fach</div>
<div class="t " style="left:185px;top:507px;">Ethik</div>
<div class="t " style="left:446px;top:507px;">Pflichtunt</div>
<div class="t " style="right:528px;top:507px;">1</div>
<div class="t " style="right:483px;top:507px;">1</div>
<div class="t " style="right:438px;top:507px;">1</div>
<div class="t " style="right:393px;top:507px;">1</div>
<div class="t " style="right:348px;top:507px;">1</div>
<div class="t " style="left:1099px;top:507px;">1-6</div>
<div class="t " style="left:1171px;top:507px;">1-6</div>
<div class="t " style="left:1243px;top:507px;">Wort</div>
<div class="t " style="left:1006px;top:507px;">Ethik</div>
<div class="t " style="right:1300px;top:525px;">5</div>
<div class="t " style="left:54px;top:525px;">Fach</div>
<div class="t " style="left:185px;top:525px;">Religionslehre und Religionspädagogik</div>
<div class="t " style="left:446px;top:525px;">Pflichtunt</div>
<div class="t " style="right:528px;top:525px;">1</div>
<div class="t " style="right:483px;top:525px;">1</div>
<div class="t " style="right:438px;top:525px;">1</div>
<div class="t " style="right:393px;top:525px;">1</div>
<div class="t " style="right:348px;top:525px;">1</div>
<div class="t " style="left:1099px;top:525px;">1-6</div>
<div class="t " style="left:1171px;top:525px;">1-6</div>
<div class="t " style="left:1243px;top:525px;">Wort</div>
<div class="t " style="left:1006px;top:525px;">Religionslehre u...</div>
<div class="t " style="right:1300px;top:543px;">6</div>
<div class="t " style="left:54px;top:543px;">Fach</div>
<div class="t " style="left:185px;top:543px;">Deutsch</div>
<div class="t " style="left:446px;top:543px;">Pflichtunt</div>
<div class="t " style="right:528px;top:543px;">1</div>
<div class="t " style="right:483px;top:543px;">1</div>
<div class="t " style="right:438px;top:543px;">1</div>
<div class="t " style="right:393px;top:543px;">1</div>
<div class="t " style="right:348px;top:543px;">1</div>
<div class="t " style="left:1099px;top:543px;">1-6</div>
<div class="t " style="left:1171px;top:543px;">1-6</div>
<div class="t " style="left:1243px;top:543px;">Wort</div>
<div class="t " style="left:1006px;top:543px;">Deutsch</div>
<div class="t " style="right:1300px;top:561px;">7</div>
<div class="t " style="left:54px;top:561px;">Fach</div>
<div class="t " style="left:185px;top:561px;">ber. Handeln</div>
<div class="t " style="left:446px;top:561px;">Handlungsfeld</div>
<div class="t " style="right:528px;top:561px;">1</div>
<div class="t " style="right:483px;top:561px;">1</div>
<div class="t " style="right:438px;top:561px;">1</div>
<div class="t " style="right:393px;top:561px;">1</div>
<div class="t " style="right:348px;top:561px;">1</div>
<div class="t " style="left:1099px;top:561px;">1-6</div>
<div class="t " style="left:1171px;top:561px;">1-6</div>
<div class="t " style="left:1243px;top:561px;">Wort</div>
<div class="t " style="left:1006px;top:561px;">Berufliches Han...</div>
<div class="t " style="right:1300px;top:579px;">8</div>
<div class="t " style="left:54px;top:579px;">Fach</div>
<div class="t " style="left:185px;top:579px;">Erzieh. u. Betreuung gestalten</div>
<div class="t " style="left:446px;top:579px;">Handlungsfeld</div>
<div class="t " style="right:528px;top:579px;">1</div>
<div class="t " style="right:483px;top:579px;">1</div>
<div class="t " style="right:438px;top:579px;">1</div>
<div class="t " style="right:393px;top:579px;">1</div>
<div class="t " style="right:348px;top:579px;">1</div>
<div class="t " style="left:1099px;top:579px;">1-6</div>
<div class="t " style="left:1171px;top:579px;">1-6</div>
<div class="t " style="left:1243px;top:579px;">Wort</div>
<div class="t " style="left:1006px;top:579px;">Erziehung und B...</div>
<div class="t " style="right:1300px;top:597px;">9</div>
<div class="t " style="left:54px;top:597px;">Fach</div>
<div class="t " style="left:185px;top:597px;">Bildung und Entw. fördern I</div>
<div class="t " style="left:446px;top:597px;">Handlungsfeld</div>
<div class="t " style="right:528px;top:597px;">1</div>
<div class="t " style="right:483px;top:597px;">1</div>
<div class="t " style="right:438px;top:597px;">1</div>
<div class="t " style="right:393px;top:597px;">1</div>
<div class="t " style="right:348px;top:597px;">1</div>
<div class="t " style="left:1099px;top:597px;">1-6</div>
<div class="t " style="left:1171px;top:597px;">1-6</div>
<div class="t " style="left:1243px;top:597px;">Wort</div>
<div class="t " style="left:1006px;top:597px;">Bildung und Ent...</div>
<div class="t " style="right:1300px;top:615px;">10</div>
<div class="t " style="left:54px;top:615px;">Fach</div>
<div class="t " style="left:185px;top:615px;">Bildung und Entw. fördern II</div>
<div class="t " style="left:446px;top:615px;">Handlungsfeld</div>
<div class="t " style="right:528px;top:615px;">1</div>
<div class="t " style="right:483px;top:615px;">1</div>
<div class="t " style="right:438px;top:615px;">1</div>
<div class="t " style="right:393px;top:615px;">1</div>
<div class="t " style="right:348px;top:615px;">1</div>
<div class="t " style="left:1099px;top:615px;">1-6</div>
<div class="t " style="left:1171px;top:615px;">1-6</div>
<div class="t " style="left:1243px;top:615px;">Wort</div>
<div class="t " style="left:1006px;top:615px;">Bildung und Ent...</div>
<div class="t " style="right:1300px;top:633px;">11</div>
<div class="t " style="left:54px;top:633px;">Fach</div>
<div class="t " style="left:185px;top:633px;">Unterschiedlichkeit und Vielfalt</div>
<div class="t " style="left:446px;top:633px;">Handlungsfeld</div>
<div class="t " style="right:528px;top:633px;">1</div>
<div class="t " style="right:483px;top:633px;">1</div>
<div class="t " style="right:438px;top:633px;">1</div>
<div class="t " style="right:393px;top:633px;">1</div>
<div class="t " style="right:348px;top:633px;">1</div>
<div class="t " style="left:1099px;top:633px;">1-6</div>
<div class="t " style="left:1171px;top:633px;">1-6</div>
<div class="t " style="left:1243px;top:633px;">Wort</div>
<div class="t " style="left:1006px;top:633px;">Unterschiedlichk...</div>
<div class="t " style="right:1300px;top:651px;">12</div>
<div class="t " style="left:54px;top:651px;">Fach</div>
<div class="t " style="left:185px;top:651px;">Zusammen und Qualität</div>
<div class="t " style="left:446px;top:651px;">Handlungsfeld</div>
<div class="t " style="right:528px;top:651px;">1</div>
<div class="t " style="right:483px;top:651px;">1</div>
<div class="t " style="right:438px;top:651px;">1</div>
<div class="t " style="right:393px;top:651px;">1</div>
<div class="t " style="right:348px;top:651px;">1</div>
<div class="t " style="left:1099px;top:651px;">1-6</div>
<div class="t " style="left:1171px;top:651px;">1-6</div>
<div class="t " style="left:1243px;top:651px;">Wort</div>
<div class="t " style="left:1006px;top:651px;">Zusammenarbei...</div>
<div class="t " style="right:1300px;top:669px;">13</div>
<div class="t " style="left:54px;top:669px;">Fach</div>
<div class="t " style="left:185px;top:669px;">Sozialpäd.Handeln</div>
<div class="t " style="left:446px;top:669px;">Handlungsfeld</div>
<div class="t " style="right:528px;top:669px;">1</div>
<div class="t " style="right:483px;top:669px;">1</div>
<div class="t " style="right:438px;top:669px;">1</div>
<div class="t " style="right:393px;top:669px;">1</div>
<div class="t " style="right:348px;top:669px;">1</div>
<div class="t " style="left:1099px;top:669px;">1-6</div>
<div class="t " style="left:1171px;top:669px;">1-6</div>
<div class="t " style="left:1243px;top:669px;">Wort</div>
<div class="t " style="left:1006px;top:669px;">Sozialpädagogis...</div>
<div class="t " style="right:1300px;top:687px;">14</div>
<div class="t " style="left:54px;top:687px;">Praktikum (Kolloquium)</div>
<div class="t " style="left:185px;top:687px;">Praktikum (Kolloquium)</div>
<div class="t " style="right:528px;top:687px;">1</div>
<div class="t " style="right:483px;top:687px;">1</div>
<div class="t " style="right:438px;top:687px;">1</div>
<div class="t " style="right:393px;top:687px;">1</div>
<div class="t " style="right:348px;top:687px;">1</div>
<div class="t " style="left:1099px;top:687px;">1-6</div>
<div class="t " style="left:1171px;top:687px;">1-6</div>
<div class="t " style="left:1243px;top:687px;">Wort</div>
<div class="t " style="left:1006px;top:687px;">Praktikum (Kollo...</div>
<div class="t " style="right:1300px;top:705px;">15</div>
<div class="t " style="left:54px;top:705px;">Bemerkungen</div>
<div class="t " style="left:185px;top:705px;">Bemerkungen</div>
<div class="t " style="left:1006px;top:705px;">Bemerkungen</div>
<div class="t " style="right:1300px;top:723px;">16</div>
<div class="t " style="left:54px;top:723px;">Zusatzprüfung</div>
<div class="t " style="left:185px;top:723px;">Zusatzprüfung</div>
<div class="t " style="left:1006px;top:723px;">Zusatzprüfung</div>
<div class="t " style="right:1300px;top:741px;">17</div>
<div class="t " style="left:54px;top:741px;">bestanden</div>
<div class="t " style="left:185px;top:741px;">bestanden</div>
<div class="t " style="left:1006px;top:741px;">bestanden</div>
<div class="t " style="right:1300px;top:759px;">18</div>
<div class="t " style="left:54px;top:759px;">Lob / Preis</div>
<div class="t " style="left:185px;top:759px;">Lob / Preis</div>
<div class="t " style="left:1006px;top:759px;">Lob / Preis</div>
<div class="t " style="right:1300px;top:777px;">19</div>
<div class="t " style="left:54px;top:777px;">Durchschnitt 1</div>
<div class="t " style="left:185px;top:777px;">Lob / Preis</div>
<div class="t " style="left:1006px;top:777px;">Durchschnitt 1</div>
<div class="r db" style="left:1300px;top:451px;height:17px"></div>
<svg class="r" style="left:1300px;top:451px" width="19" height="17"><path d="M5.8 3.6 L14.2 12 M14.2 3.6 L5.8 12" stroke="#F23A4A" stroke-width="3.6" stroke-linecap="round"/><path d="M6.2 4 L13.8 11.6 M13.8 4 L6.2 11.6" stroke="#FF7E88" stroke-width="1" stroke-linecap="round"/></svg>
<div class="r db" style="left:1300px;top:469px;height:17px"></div>
<svg class="r" style="left:1300px;top:469px" width="19" height="17"><path d="M5.8 3.6 L14.2 12 M14.2 3.6 L5.8 12" stroke="#F23A4A" stroke-width="3.6" stroke-linecap="round"/><path d="M6.2 4 L13.8 11.6 M13.8 4 L6.2 11.6" stroke="#FF7E88" stroke-width="1" stroke-linecap="round"/></svg>
<div class="r db" style="left:1300px;top:487px;height:17px"></div>
<svg class="r" style="left:1300px;top:487px" width="19" height="17"><path d="M5.8 3.6 L14.2 12 M14.2 3.6 L5.8 12" stroke="#F23A4A" stroke-width="3.6" stroke-linecap="round"/><path d="M6.2 4 L13.8 11.6 M13.8 4 L6.2 11.6" stroke="#FF7E88" stroke-width="1" stroke-linecap="round"/></svg>
<div class="r db" style="left:1300px;top:505px;height:17px"></div>
<svg class="r" style="left:1300px;top:505px" width="19" height="17"><path d="M5.8 3.6 L14.2 12 M14.2 3.6 L5.8 12" stroke="#F23A4A" stroke-width="3.6" stroke-linecap="round"/><path d="M6.2 4 L13.8 11.6 M13.8 4 L6.2 11.6" stroke="#FF7E88" stroke-width="1" stroke-linecap="round"/></svg>
<div class="r db" style="left:1300px;top:523px;height:17px"></div>
<svg class="r" style="left:1300px;top:523px" width="19" height="17"><path d="M5.8 3.6 L14.2 12 M14.2 3.6 L5.8 12" stroke="#F23A4A" stroke-width="3.6" stroke-linecap="round"/><path d="M6.2 4 L13.8 11.6 M13.8 4 L6.2 11.6" stroke="#FF7E88" stroke-width="1" stroke-linecap="round"/></svg>
<div class="r db" style="left:1300px;top:541px;height:17px"></div>
<svg class="r" style="left:1300px;top:541px" width="19" height="17"><path d="M5.8 3.6 L14.2 12 M14.2 3.6 L5.8 12" stroke="#F23A4A" stroke-width="3.6" stroke-linecap="round"/><path d="M6.2 4 L13.8 11.6 M13.8 4 L6.2 11.6" stroke="#FF7E88" stroke-width="1" stroke-linecap="round"/></svg>
<div class="r db" style="left:1300px;top:559px;height:17px"></div>
<svg class="r" style="left:1300px;top:559px" width="19" height="17"><path d="M5.8 3.6 L14.2 12 M14.2 3.6 L5.8 12" stroke="#F23A4A" stroke-width="3.6" stroke-linecap="round"/><path d="M6.2 4 L13.8 11.6 M13.8 4 L6.2 11.6" stroke="#FF7E88" stroke-width="1" stroke-linecap="round"/></svg>
<div class="r db" style="left:1300px;top:577px;height:17px"></div>
<svg class="r" style="left:1300px;top:577px" width="19" height="17"><path d="M5.8 3.6 L14.2 12 M14.2 3.6 L5.8 12" stroke="#F23A4A" stroke-width="3.6" stroke-linecap="round"/><path d="M6.2 4 L13.8 11.6 M13.8 4 L6.2 11.6" stroke="#FF7E88" stroke-width="1" stroke-linecap="round"/></svg>
<div class="r db" style="left:1300px;top:595px;height:17px"></div>
<svg class="r" style="left:1300px;top:595px" width="19" height="17"><path d="M5.8 3.6 L14.2 12 M14.2 3.6 L5.8 12" stroke="#F23A4A" stroke-width="3.6" stroke-linecap="round"/><path d="M6.2 4 L13.8 11.6 M13.8 4 L6.2 11.6" stroke="#FF7E88" stroke-width="1" stroke-linecap="round"/></svg>
<div class="r db" style="left:1300px;top:613px;height:17px"></div>
<svg class="r" style="left:1300px;top:613px" width="19" height="17"><path d="M5.8 3.6 L14.2 12 M14.2 3.6 L5.8 12" stroke="#F23A4A" stroke-width="3.6" stroke-linecap="round"/><path d="M6.2 4 L13.8 11.6 M13.8 4 L6.2 11.6" stroke="#FF7E88" stroke-width="1" stroke-linecap="round"/></svg>
<div class="r db" style="left:1300px;top:631px;height:17px"></div>
<svg class="r" style="left:1300px;top:631px" width="19" height="17"><path d="M5.8 3.6 L14.2 12 M14.2 3.6 L5.8 12" stroke="#F23A4A" stroke-width="3.6" stroke-linecap="round"/><path d="M6.2 4 L13.8 11.6 M13.8 4 L6.2 11.6" stroke="#FF7E88" stroke-width="1" stroke-linecap="round"/></svg>
<div class="r db" style="left:1300px;top:649px;height:17px"></div>
<svg class="r" style="left:1300px;top:649px" width="19" height="17"><path d="M5.8 3.6 L14.2 12 M14.2 3.6 L5.8 12" stroke="#F23A4A" stroke-width="3.6" stroke-linecap="round"/><path d="M6.2 4 L13.8 11.6 M13.8 4 L6.2 11.6" stroke="#FF7E88" stroke-width="1" stroke-linecap="round"/></svg>
<div class="r db" style="left:1300px;top:667px;height:17px"></div>
<svg class="r" style="left:1300px;top:667px" width="19" height="17"><path d="M5.8 3.6 L14.2 12 M14.2 3.6 L5.8 12" stroke="#F23A4A" stroke-width="3.6" stroke-linecap="round"/><path d="M6.2 4 L13.8 11.6 M13.8 4 L6.2 11.6" stroke="#FF7E88" stroke-width="1" stroke-linecap="round"/></svg>
<div class="r db" style="left:1300px;top:685px;height:17px"></div>
<svg class="r" style="left:1300px;top:685px" width="19" height="17"><path d="M5.8 3.6 L14.2 12 M14.2 3.6 L5.8 12" stroke="#F23A4A" stroke-width="3.6" stroke-linecap="round"/><path d="M6.2 4 L13.8 11.6 M13.8 4 L6.2 11.6" stroke="#FF7E88" stroke-width="1" stroke-linecap="round"/></svg>
<div class="r db" style="left:1300px;top:703px;height:17px"></div>
<svg class="r" style="left:1300px;top:703px" width="19" height="17"><path d="M5.8 3.6 L14.2 12 M14.2 3.6 L5.8 12" stroke="#F23A4A" stroke-width="3.6" stroke-linecap="round"/><path d="M6.2 4 L13.8 11.6 M13.8 4 L6.2 11.6" stroke="#FF7E88" stroke-width="1" stroke-linecap="round"/></svg>
<div class="r db" style="left:1300px;top:721px;height:17px"></div>
<svg class="r" style="left:1300px;top:721px" width="19" height="17"><path d="M5.8 3.6 L14.2 12 M14.2 3.6 L5.8 12" stroke="#F23A4A" stroke-width="3.6" stroke-linecap="round"/><path d="M6.2 4 L13.8 11.6 M13.8 4 L6.2 11.6" stroke="#FF7E88" stroke-width="1" stroke-linecap="round"/></svg>
<div class="r db" style="left:1300px;top:739px;height:17px"></div>
<svg class="r" style="left:1300px;top:739px" width="19" height="17"><path d="M5.8 3.6 L14.2 12 M14.2 3.6 L5.8 12" stroke="#F23A4A" stroke-width="3.6" stroke-linecap="round"/><path d="M6.2 4 L13.8 11.6 M13.8 4 L6.2 11.6" stroke="#FF7E88" stroke-width="1" stroke-linecap="round"/></svg>
<div class="r db" style="left:1300px;top:757px;height:17px"></div>
<svg class="r" style="left:1300px;top:757px" width="19" height="17"><path d="M5.8 3.6 L14.2 12 M14.2 3.6 L5.8 12" stroke="#F23A4A" stroke-width="3.6" stroke-linecap="round"/><path d="M6.2 4 L13.8 11.6 M13.8 4 L6.2 11.6" stroke="#FF7E88" stroke-width="1" stroke-linecap="round"/></svg>
<div class="r db" style="left:1300px;top:775px;height:17px"></div>
<svg class="r" style="left:1300px;top:775px" width="19" height="17"><path d="M5.8 3.6 L14.2 12 M14.2 3.6 L5.8 12" stroke="#F23A4A" stroke-width="3.6" stroke-linecap="round"/><path d="M6.2 4 L13.8 11.6 M13.8 4 L6.2 11.6" stroke="#FF7E88" stroke-width="1" stroke-linecap="round"/></svg>
<div class="r dbi" style="left:1300px;top:793px;height:17px"></div>
<svg class="r" style="left:1300px;top:793px" width="19" height="17"><path d="M5.8 3.6 L14.2 12 M14.2 3.6 L5.8 12" stroke="#8C8C8C" stroke-width="3.4" stroke-linecap="round"/></svg>
<div class="r" style="left:1320px;top:451px;width:17px;height:363px;background:#FCFCFE"></div>
<div class="r" style="left:1322px;top:452px;width:13px;height:15px;background:linear-gradient(#F0F0F4,#E4E4EA)"></div>
<svg class="r" style="left:1323px;top:456px" width="10" height="6"><path d="M1.2 5 L5 1.4 L8.8 5" stroke="#D2D2DA" stroke-width="2" fill="none"/></svg>
<div class="r red" style="left:50px;top:1px;width:222px;height:21px"></div>
<div class="r red" style="left:731px;top:192px;width:360px;height:41px"></div>
<div class="r red" style="left:181px;top:558px;width:410px;height:128px"></div>
</body></html>
